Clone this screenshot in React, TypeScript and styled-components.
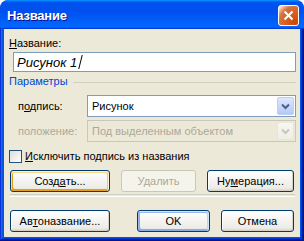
import React from 'react';
import styled, { createGlobalStyle } from 'styled-components';

const GlobalStyle = createGlobalStyle`
  html, body {
    margin: 0;
    padding: 0;
    background: #ffffff;
  }
  body {
    font-family: "Liberation Sans", Arial, sans-serif;
    font-size: 11px;
  }
`;

const Window = styled.div`
  width: 304px;
  height: 241px;
  display: flex;
  flex-direction: column;
  border-radius: 8px 8px 0 0;
  overflow: hidden;
  background: #0054e3;
`;

const TitleBar = styled.div`
  height: 29px;
  flex: none;
  display: flex;
  align-items: center;
  padding: 0 5px 0 7px;
  box-sizing: border-box;
  background: linear-gradient(180deg, #0997ff, #0053ee 8%, #0050ee 40%, #0066ff 88%, #0066ff 93%, #005bff 95%, #003dd7 96%, #003dd7);
  border-radius: 8px 8px 0 0;
`;

const Title = styled.div`
  flex: 1;
  color: #ffffff;
  font-weight: bold;
  font-size: 13px;
  letter-spacing: -0.2px;
  text-shadow: 1px 1px #0f1089;
  padding-top: 2px;
`;

const CloseButton = styled.div`
  width: 21px;
  height: 21px;
  box-sizing: border-box;
  border: 1px solid #ffffff;
  border-radius: 3px;
  display: flex;
  align-items: center;
  justify-content: center;
  background: radial-gradient(circle at 90% 90%, #cc4600 0%, #dc6527 55%, #cd7546 70%, #ffccb2 90%, #ffffff 100%);
  margin-top: 1px;
`;

const Frame = styled.div`
  flex: 1;
  display: flex;
  padding: 0 4px 4px;
  background: #0054e3;
  box-shadow: inset -1px -1px #00138c, inset 1px 0 #0831d9, inset -2px -2px #001ea0, inset 2px 0 #166aee, inset -3px -3px #003bda, inset 3px 0 #0855dd;
`;

const Client = styled.div`
  flex: 1;
  display: flex;
  flex-direction: column;
  background: #ece9d8;
  padding: 0 4px 0 5px;
  color: #000000;
  line-height: 13px;
`;

const Label = styled.div<{ $disabled?: boolean }>`
  color: ${(p) => (p.$disabled ? '#aca899' : '#000000')};
  white-space: nowrap;
`;

const TopLabel = styled(Label)`
  margin-top: 8px;
`;

const TextInput = styled.div`
  margin: 2px 0 0 4px;
  height: 20px;
  box-sizing: border-box;
  border: 1px solid #7f9db9;
  background: #ffffff;
  display: flex;
  align-items: center;
  padding-left: 3px;
  font-style: italic;
  font-size: 13px;
`;

const Caret = styled.span`
  display: inline-block;
  width: 0;
  height: 14px;
  border-left: 1px solid #000000;
  margin-left: 3px;
  transform: skewX(-14deg);
`;

const GroupHeader = styled.div`
  margin-top: 3px;
  display: flex;
  align-items: flex-start;
`;

const GroupTitle = styled.div`
  color: #0046d5;
  padding-right: 5px;
`;

const GroupLine = styled.div`
  flex: 1;
  height: 1px;
  margin-top: 7px;
  background: #d0d0bf;
`;

const FieldRow = styled.div<{ $gap: number }>`
  margin-top: ${(p) => p.$gap}px;
  display: flex;
  align-items: center;
  padding-left: 9px;
`;

const FieldLabel = styled(Label)`
  width: 69px;
  flex: none;
`;

const Combo = styled.div<{ $disabled?: boolean }>`
  flex: 1;
  height: 22px;
  box-sizing: border-box;
  border: 1px solid ${(p) => (p.$disabled ? '#c9c7ba' : '#7f9db9')};
  background: ${(p) => (p.$disabled ? '#ece9d8' : '#ffffff')};
  color: ${(p) => (p.$disabled ? '#aca899' : '#000000')};
  display: flex;
  align-items: center;
  padding: 1px;
`;

const ComboText = styled.div`
  flex: 1;
  padding-left: 3px;
  white-space: nowrap;
  overflow: hidden;
`;

const DropButton = styled.div<{ $disabled?: boolean }>`
  width: 17px;
  height: 18px;
  box-sizing: border-box;
  border: 1px solid ${(p) => (p.$disabled ? '#e8e6dc' : '#bacefa')};
  border-radius: 2px;
  background: ${(p) =>
    p.$disabled
      ? 'linear-gradient(180deg, #f7f6f1, #eeede6)'
      : 'linear-gradient(180deg, #dde7fe, #b5c9f7)'};
  display: flex;
  align-items: center;
  justify-content: center;
`;

const CheckRow = styled.div`
  margin-top: 8px;
  display: flex;
  align-items: center;
`;

const CheckBox = styled.div`
  width: 13px;
  height: 13px;
  box-sizing: border-box;
  border: 1px solid #1c5180;
  background: linear-gradient(135deg, #dcdcd7, #ffffff);
  margin-right: 3px;
`;

const ButtonRow = styled.div<{ $gap: number }>`
  margin: ${(p) => p.$gap}px 2px 0 1px;
  display: flex;
  gap: 11px;
`;

const Spacer = styled.div`
  flex: 1;
`;

type ButtonState = 'normal' | 'focus' | 'default' | 'disabled';

const shadows: Record<ButtonState, string> = {
  normal: 'inset -1px -1px #d6d0c5, inset 1px 1px #ffffff',
  focus:
    'inset -1px 1px #fff0cf, inset 1px 2px #fdd889, inset -2px 2px #fbc761, inset 2px -2px #e5a01a',
  default:
    'inset -1px 1px #cee7ff, inset 1px 2px #98b8ea, inset -2px 2px #bcd4f6, inset 1px -1px #89ade4, inset 2px -2px #89ade4',
  disabled: 'none',
};

const Button = styled.div<{ $w: number; $state?: ButtonState }>`
  width: ${(p) => p.$w}px;
  height: 22px;
  box-sizing: border-box;
  border: 1px solid ${(p) => (p.$state === 'disabled' ? '#cac8bb' : '#003c74')};
  border-radius: 3px;
  background: ${(p) =>
    p.$state === 'disabled'
      ? '#f5f4ea'
      : 'linear-gradient(180deg, #ffffff, #ecebe6 86%, #d6d0c5)'};
  box-shadow: ${(p) => shadows[p.$state ?? 'normal']};
  color: ${(p) => (p.$state === 'disabled' ? '#aca899' : '#000000')};
  display: flex;
  align-items: center;
  justify-content: center;
  white-space: nowrap;
`;

const Separator = styled.div`
  margin: 2px 1px 0 1px;
  height: 1px;
  border-top: 1px solid #d0d0bf;
  border-bottom: 1px solid #ffffff;
`;

const U = styled.span`
  text-decoration: underline;
`;

function Chevron ({ color }: { color: string }) {
  return (
    <svg width='9' height='7' viewBox='0 0 9 7'>
      <path d='M1 1.5 L4.5 5 L8 1.5' fill='none' stroke={color} strokeWidth='2' />
    </svg>
  );
}

export default function App () {
  return (
    <>
      <GlobalStyle />
      <Window>
        <TitleBar>
          <Title>Название</Title>
          <CloseButton>
            <svg width='11' height='11' viewBox='0 0 11 11'>
              <path d='M1.5 1.5 L9.5 9.5 M9.5 1.5 L1.5 9.5' stroke='#ffffff' strokeWidth='2' />
            </svg>
          </CloseButton>
        </TitleBar>
        <Frame>
          <Client>
            <TopLabel><U>Н</U>азвание:</TopLabel>
            <TextInput>Рисунок 1<Caret /></TextInput>
            <GroupHeader>
              <GroupTitle>Параметры</GroupTitle>
              <GroupLine />
            </GroupHeader>
            <FieldRow $gap={7}>
              <FieldLabel>п<U>о</U>дпись:</FieldLabel>
              <Combo>
                <ComboText>Рисунок</ComboText>
                <DropButton><Chevron color='#4d6185' /></DropButton>
              </Combo>
            </FieldRow>
            <FieldRow $gap={3}>
              <FieldLabel $disabled>положение:</FieldLabel>
              <Combo $disabled>
                <ComboText>Под выделенным объектом</ComboText>
                <DropButton $disabled><Chevron color='#c9c7ba' /></DropButton>
              </Combo>
            </FieldRow>
            <CheckRow>
              <CheckBox />
              <Label><U>И</U>сключить подпись из названия</Label>
            </CheckRow>
            <ButtonRow $gap={7}>
              <Button $w={100} $state='focus'>Созд<U>а</U>ть...</Button>
              <Button $w={75} $state='disabled'>Удалить</Button>
              <Button $w={87}>Ну<U>м</U>ерация...</Button>
            </ButtonRow>
            <Separator />
            <ButtonRow $gap={13}>
              <Button $w={100}>Ав<U>т</U>оназвание...</Button>
              <Spacer />
              <Button $w={73} $state='default'>OK</Button>
              <Button $w={73}>Отмена</Button>
            </ButtonRow>
          </Client>
        </Frame>
      </Window>
    </>
  );
}
